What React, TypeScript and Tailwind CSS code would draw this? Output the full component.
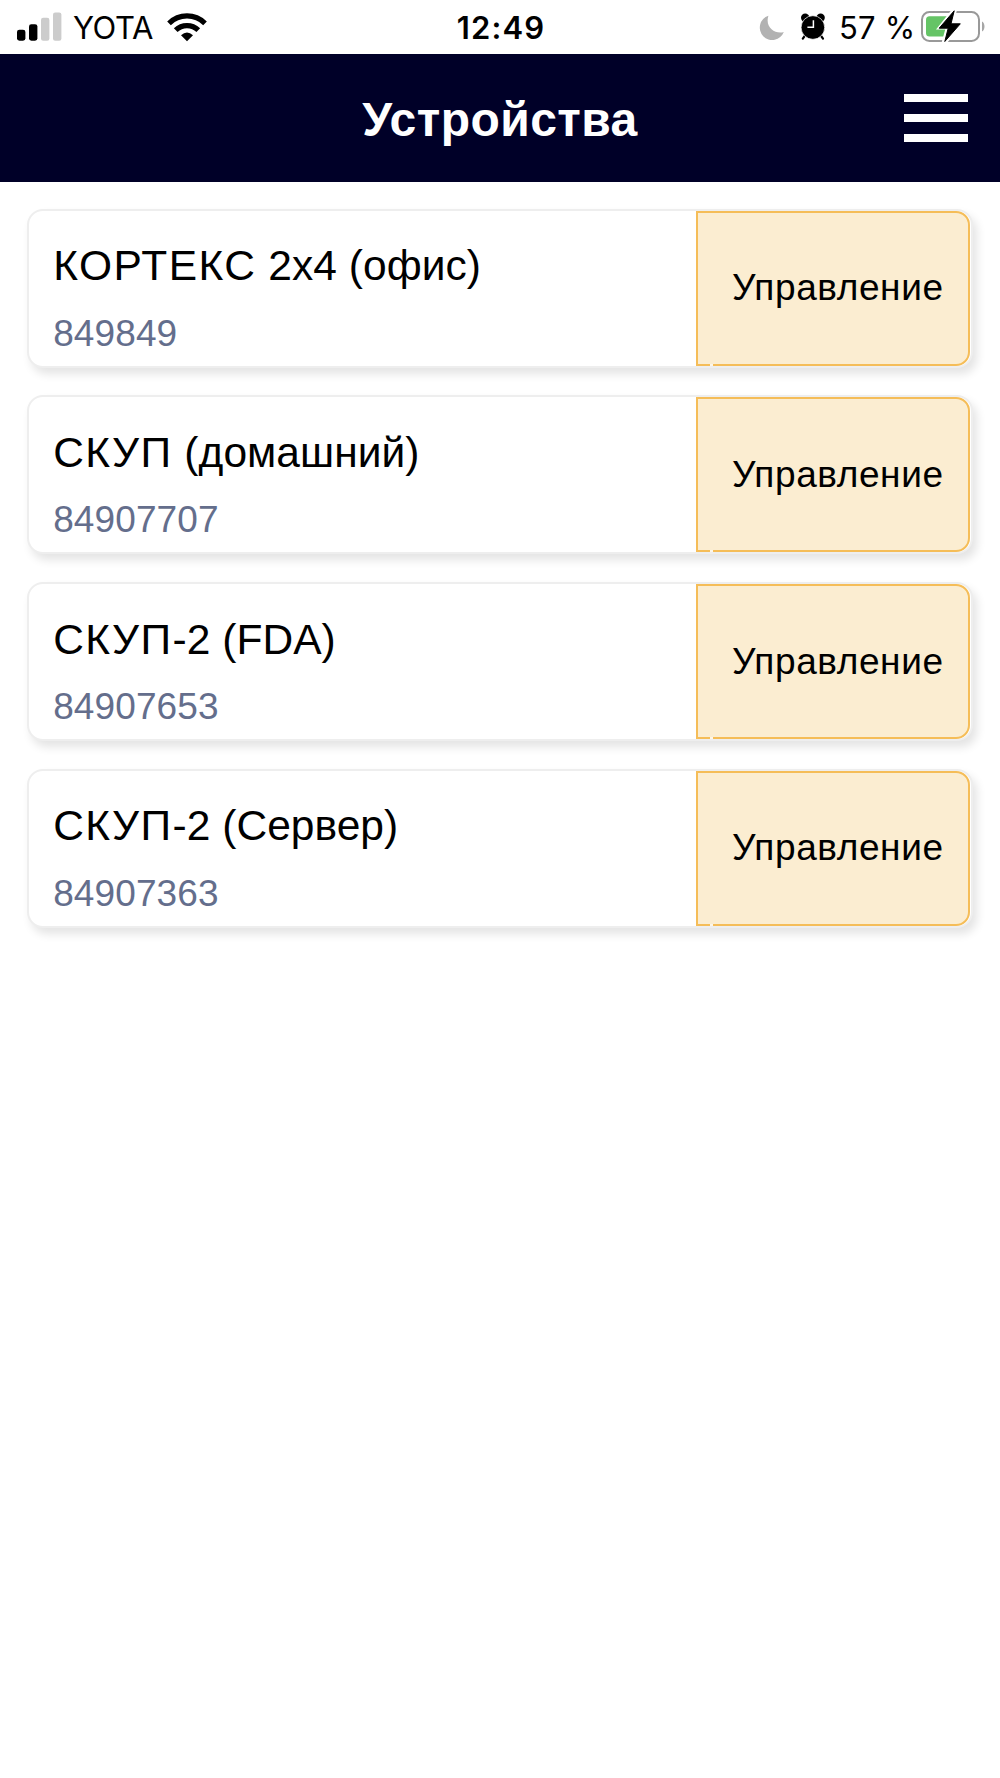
const devices = [
  { model: "КОРТЕКС", label: " 2x4 (офис)", id: "849849" },
  { model: "СКУП", label: " (домашний)", id: "84907707" },
  { model: "СКУП", label: "-2 (FDA)", id: "84907653" },
  { model: "СКУП", label: "-2 (Сервер)", id: "84907363" },
];

function SignalIcon() {
  return (
    <svg className="h-[30px] w-[45px]" viewBox="0 0 45 30">
      <rect x="0" y="17.7" width="8.4" height="11" rx="2.4" fill="#000" />
      <rect x="12" y="12.2" width="8.4" height="16.5" rx="2.4" fill="#000" />
      <rect x="24" y="5.7" width="8.4" height="23" rx="2.2" fill="#ccc" />
      <rect x="36" y="0.4" width="8.4" height="28.3" rx="2.2" fill="#ccc" />
    </svg>
  );
}

function WifiIcon() {
  return (
    <svg className="h-[30px] w-[40px]" viewBox="0 0 40 30">
      <g fill="none" stroke="#000" strokeWidth="5.2">
        <path d="M2 11.3A25.6 25.6 0 0 1 38 11.3" />
        <path d="M8.7 18.2A16 16 0 0 1 31.3 18.2" />
      </g>
      <path d="M20 29.2L14 23.2Q20 17.8 26 23.2Z" fill="#000" />
    </svg>
  );
}

function MoonIcon() {
  return (
    <svg className="h-[26px] w-[26px]" viewBox="0 0 26 26">
      <path d="M9.4 0.8A12.4 12.4 0 1 0 24.8 17C16.5 19.6 5.6 12.5 9.4 0.8Z" fill="#b2b2b2" />
    </svg>
  );
}

function AlarmIcon() {
  return (
    <svg className="h-[28px] w-[26px]" viewBox="0 0 26 28">
      <circle cx="5.200" cy="4.800" r="4.200" fill="#000" />
      <circle cx="20.600" cy="4.800" r="4.200" fill="#000" />
      <path d="M5.400 22L2.800 25.600M20.400 22L23 25.600" stroke="#000" strokeWidth="2.200" strokeLinecap="round" />
      <circle cx="12.900" cy="14.500" r="11.800" fill="#000" stroke="#fff" strokeWidth="0.700" />
      <path d="M13.400 7.200V14.300H7.400" fill="none" stroke="#fff" strokeWidth="1.500" />
    </svg>
  );
}

function BatteryIcon() {
  return (
    <svg className="h-[33px] w-[66px]" viewBox="0 0 66 33">
      <rect x="2" y="2" width="57" height="29" rx="7.5" fill="#fff" stroke="#999" strokeWidth="2" />
      <rect x="6" y="6.2" width="27" height="20.4" rx="3.5" fill="#65c466" />
      <path d="M62 11.5C65.3 13 65.3 20 62 21.5Z" fill="#a6a6a6" />
      <path d="M31.5 0L16 19.5H25.2L21.500 33H27L43.500 12.500H33.500L37 0Z" fill="#fff" />
      <path d="M34.200 0.800L19.200 18.200H28.200L24.800 31.500L40.300 13.800H31Z" fill="#000" stroke="#000" strokeWidth="1" strokeLinejoin="round" />
    </svg>
  );
}

function StatusBar() {
  return (
    <div className="flex h-[53.6px] items-start justify-between pl-[17px] pr-[14px] font-['Inter','Liberation_Sans',sans-serif] text-[31px] leading-[34px] text-black">
      <div className="flex w-[360px] items-start">
        <div className="pt-3">
          <SignalIcon />
        </div>
        <span className="ml-[11px] w-[82px] whitespace-nowrap pt-[11px] tracking-[-0.4px]">YOTA</span>
        <div className="ml-3 pt-3">
          <WifiIcon />
        </div>
      </div>
      <span className="whitespace-nowrap pt-[11px] font-semibold tracking-[1.1px]">12:49</span>
      <div className="flex w-[361px] items-start justify-end">
        <div className="pt-[15px]">
          <MoonIcon />
        </div>
        <div className="ml-[15px] pt-[13px]">
          <AlarmIcon />
        </div>
        <span className="ml-[13px] w-[77px] whitespace-nowrap pt-[11px] tracking-[0.2px]">57 %</span>
        <div className="ml-[4px] pt-[10px]">
          <BatteryIcon />
        </div>
      </div>
    </div>
  );
}

function Header() {
  return (
    <header className="grid h-[128px] grid-cols-[1fr_auto_1fr] items-center bg-[#000028] px-8">
      <div />
      <h1 className="pt-[5px] text-[48px] font-bold leading-[56px] tracking-[0.45px] text-white">Устройства</h1>
      <button className="flex w-[64.5px] flex-col gap-[12px] justify-self-end" aria-label="Меню">
        <span className="h-[8px] w-full bg-white" />
        <span className="h-[8px] w-full bg-white" />
        <span className="h-[8px] w-full bg-white" />
      </button>
    </header>
  );
}

function DeviceCard({ model, label, id }: { model: string; label: string; id: string }) {
  return (
    <li className="flex h-[159px] rounded-[16px] border-2 border-[#eeeeee] bg-white shadow-[4px_6px_10px_rgba(0,0,0,0.11)]">
      <div className="flex-1 pl-[24.2px] pt-[31.5px]">
        <div className="whitespace-pre text-[42.5px] leading-[48px] text-black">
          <span className="tracking-[1.45px]">{model}</span>
          <span className="tracking-[0.05px]">{label}</span>
        </div>
        <div className="mt-[21.5px] text-[37px] leading-[44px] tracking-[0.1px] text-[#646e8c]">{id}</div>
      </div>
      <button className="relative mr-px w-[274.5px] rounded-r-[14px] border-2 border-[#f5bd58] bg-[#fbedd1] pl-[10px] text-[37px] leading-[40px] tracking-[0.6px] text-black">
        Управление
        <span className="absolute -bottom-[2px] left-[12px] h-[2px] w-[3px] bg-[#fdf6e8]" />
      </button>
    </li>
  );
}

export default function App() {
  return (
    <div className="h-[1778px] w-[1000px] overflow-hidden bg-white font-['Liberation_Sans',Arial,sans-serif]">
      <StatusBar />
      <Header />
      <ul className="flex flex-col gap-[27.65px] px-[27px] pt-[27.2px]">
        {devices.map((device) => (
          <DeviceCard key={device.id} {...device} />
        ))}
      </ul>
    </div>
  );
}
